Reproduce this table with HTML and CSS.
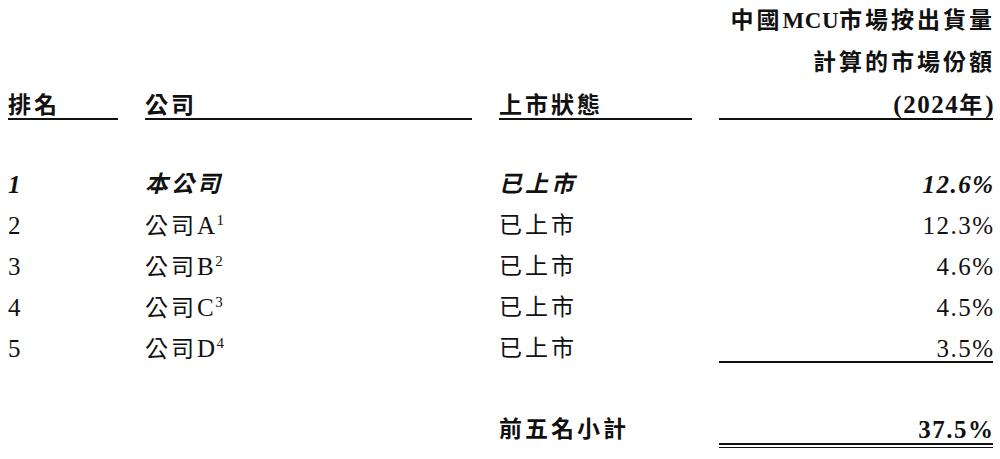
FILE: index.html
```html
<!DOCTYPE html>
<html lang="zh-Hant">
<head>
<meta charset="utf-8">
<title>中國MCU市場份額</title>
<link rel="stylesheet" href="styles.css">
</head>
<body>
<div class="table">
  <div class="grid head">
    <div class="hc"><div class="ht">排名</div></div>
    <div class="hc"><div class="ht">公司</div></div>
    <div class="hc"><div class="ht">上市狀態</div></div>
    <div class="hc right"><div class="ht">中國<span class="lat mcu">MCU</span>市場按出貨量<br>計算的市場份額<br><span class="lat">(2024</span>年<span class="lat">)</span></div></div>
  </div>

  <div class="rows">
    <div class="grid row em">
      <div class="cell"><span class="lat">1</span></div>
      <div class="cell">本公司</div>
      <div class="cell">已上市</div>
      <div class="cell right"><span class="lat v">12.6%</span></div>
    </div>
    <div class="grid row">
      <div class="cell"><span class="lat">2</span></div>
      <div class="cell">公司<span class="lat">A</span><sup class="fn">1</sup></div>
      <div class="cell">已上市</div>
      <div class="cell right"><span class="lat v">12.3%</span></div>
    </div>
    <div class="grid row">
      <div class="cell"><span class="lat">3</span></div>
      <div class="cell">公司<span class="lat">B</span><sup class="fn">2</sup></div>
      <div class="cell">已上市</div>
      <div class="cell right"><span class="lat v">4.6%</span></div>
    </div>
    <div class="grid row">
      <div class="cell"><span class="lat">4</span></div>
      <div class="cell">公司<span class="lat">C</span><sup class="fn">3</sup></div>
      <div class="cell">已上市</div>
      <div class="cell right"><span class="lat v">4.5%</span></div>
    </div>
    <div class="grid row">
      <div class="cell"><span class="lat">5</span></div>
      <div class="cell">公司<span class="lat">D</span><sup class="fn">4</sup></div>
      <div class="cell">已上市</div>
      <div class="cell right underline"><span class="lat v">3.5%</span></div>
    </div>
  </div>

  <div class="grid row total">
    <div class="cell"></div>
    <div class="cell"></div>
    <div class="cell">前五名小計</div>
    <div class="cell right dbl"><div class="dbl-in"><span class="lat v">37.5%</span></div></div>
  </div>
</div>
</body>
</html>
```

FILE: styles.css
```css
html, body {
  margin: 0;
  padding: 0;
  background: #ffffff;
}

body {
  padding: 0 7px 0 8px;
  color: #111111;
  font-family: "Liberation Serif", "Noto Sans CJK TC", serif;
  font-size: 23px;
  letter-spacing: 3px;
}

.table {
  width: 985px;
}

.grid {
  display: grid;
  grid-template-columns: 110px 327px 193px 274px;
  column-gap: 27px;
}

.lat {
  font-size: 25px;
  letter-spacing: 1.5px;
}

.mcu {
  font-size: 23px;
  letter-spacing: 0.5px;
}

/* header */
.head {
  height: 116px;
}

.hc {
  display: flex;
  flex-direction: column;
  justify-content: flex-end;
  border-bottom: 2px solid #111111;
  font-weight: 700;
}

.ht {
  line-height: 42px;
  margin-bottom: -9px;
  white-space: nowrap;
}

.right {
  text-align: right;
}

.right .ht {
  margin-right: -2px;
}

.right .v {
  margin-right: -1.5px;
}

/* body rows */
.rows {
  margin-top: 48px;
}

.row {
  height: 41px;
  line-height: 41px;
}

.cell {
  white-space: nowrap;
  align-self: start;
}

.em {
  font-weight: 700;
  font-style: italic;
}

.fn {
  font-size: 15px;
  line-height: 0;
  letter-spacing: 0;
  vertical-align: 9px;
  margin-left: 0;
}

.underline {
  height: 33px;
  border-bottom: 2px solid #111111;
}

/* subtotal */
.total {
  margin-top: 40px;
  font-weight: 700;
}

.dbl {
  border-bottom: 1px solid #111111;
  padding-bottom: 2px;
}

.dbl-in {
  height: 34px;
  border-bottom: 2px solid #111111;
}
```
